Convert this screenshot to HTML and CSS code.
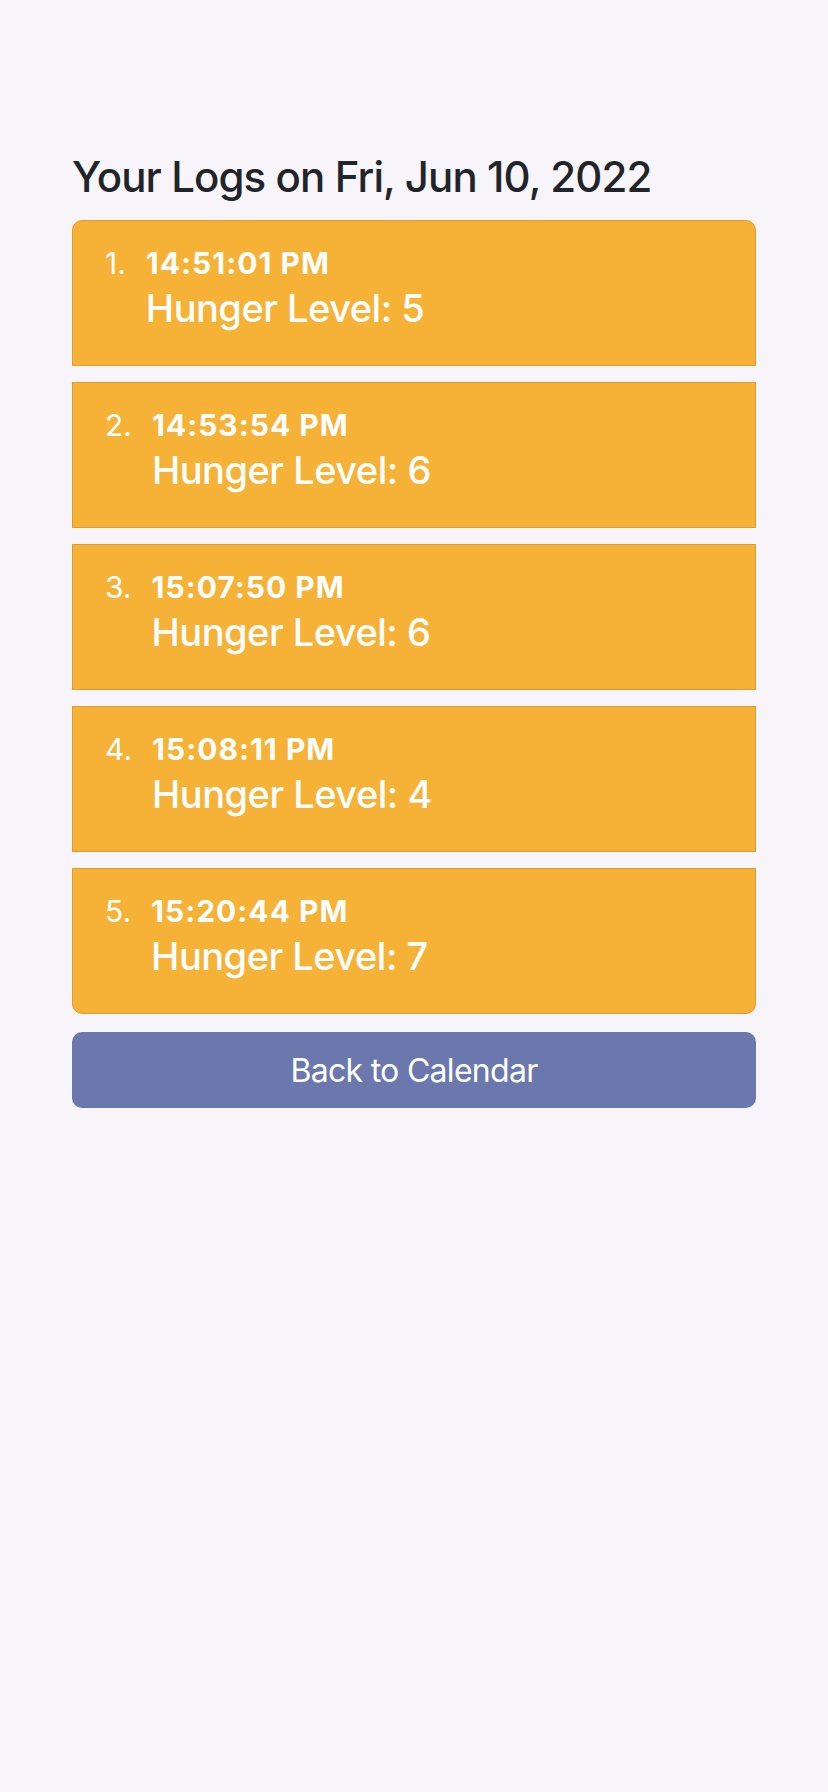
FILE: index.html
```html
<!DOCTYPE html>
<html lang="en">
<head>
<meta charset="utf-8">
<title>Your Logs</title>
<link rel="stylesheet" href="styles.css">
</head>
<body>
<main class="page">
  <h1 class="title">Your Logs on Fri, Jun 10, 2022</h1>
  <ol class="logs">
    <li class="log">
      <div class="log-body">
        <div class="log-time">14:51:01 PM</div>
        <div class="log-level">Hunger Level: 5</div>
      </div>
    </li>
    <li class="log">
      <div class="log-body">
        <div class="log-time">14:53:54 PM</div>
        <div class="log-level">Hunger Level: 6</div>
      </div>
    </li>
    <li class="log">
      <div class="log-body">
        <div class="log-time">15:07:50 PM</div>
        <div class="log-level">Hunger Level: 6</div>
      </div>
    </li>
    <li class="log">
      <div class="log-body">
        <div class="log-time">15:08:11 PM</div>
        <div class="log-level">Hunger Level: 4</div>
      </div>
    </li>
    <li class="log">
      <div class="log-body">
        <div class="log-time">15:20:44 PM</div>
        <div class="log-level">Hunger Level: 7</div>
      </div>
    </li>
  </ol>
  <button class="back-btn" type="button">Back to Calendar</button>
</main>
</body>
</html>
```

FILE: styles.css
```css
* {
  box-sizing: border-box;
}

html, body {
  margin: 0;
  padding: 0;
  background: #f8f5fa;
}

body {
  font-family: Inter, "Noto Sans", "Liberation Sans", sans-serif;
  color: #212529;
}

.page {
  padding: 152px 72px 0;
  display: flex;
  flex-direction: column;
}

.title {
  margin: 0 0 18px;
  font-size: 42px;
  line-height: 50px;
  font-weight: 500;
  color: #212529;
  letter-spacing: -0.9px;
}

.logs {
  list-style: none;
  margin: 0;
  padding: 0;
  counter-reset: log;
  display: flex;
  flex-direction: column;
  gap: 16px;
}

.log {
  counter-increment: log;
  display: flex;
  align-items: flex-start;
  height: 146px;
  padding: 21px 32px 33px;
  background: #f5b236;
  border: 1px solid #df9d30;
  color: #ffffff;
}

.log:first-child {
  border-top-left-radius: 10px;
  border-top-right-radius: 10px;
}

.log:last-child {
  border-bottom-left-radius: 10px;
  border-bottom-right-radius: 10px;
}

.log::before {
  content: counter(log) ".";
  font-size: 30px;
  line-height: 42px;
  font-weight: 400;
  letter-spacing: 0;
}

.log-body {
  margin-left: 20px;
}

.log-time {
  font-size: 30px;
  line-height: 42px;
  font-weight: 700;
  letter-spacing: 1px;
}

.log-level {
  font-size: 38px;
  line-height: 48px;
  font-weight: 500;
  letter-spacing: -0.5px;
}

.back-btn {
  margin-top: 18px;
  height: 76px;
  width: 100%;
  border: none;
  border-radius: 10px;
  background: #6a78ae;
  color: #ffffff;
  font-family: inherit;
  font-size: 32px;
  font-weight: 400;
  letter-spacing: -0.7px;
  padding: 0;
}
```
